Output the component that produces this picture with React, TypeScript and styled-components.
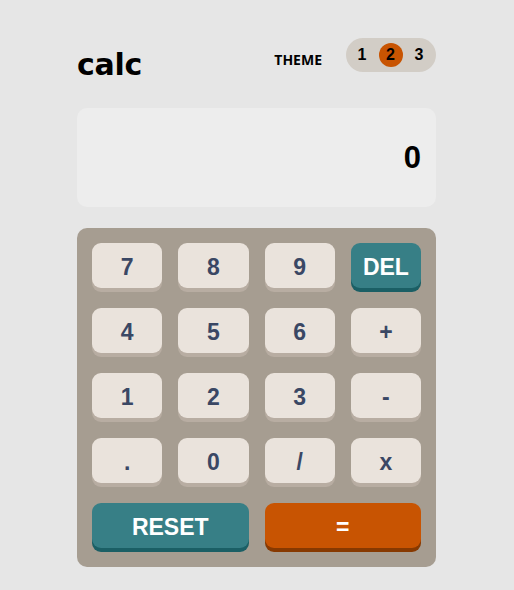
import React, { useState } from "react";
import styled, { createGlobalStyle, css } from "styled-components";

const GlobalStyle = createGlobalStyle`
  body {
    margin: 0;
    background: #e6e6e6;
    font-family: "Liberation Sans", Arial, sans-serif;
  }
`;

const Page = styled.div`
  width: 359px;
  margin: 0 auto;
  padding: 38px 1px 0 0;
`;

const Header = styled.header`
  display: flex;
  align-items: center;
  justify-content: space-between;
  height: 34px;
  margin-bottom: 36px;
`;

const Logo = styled.h1`
  margin: 0;
  font-family: "DejaVu Sans", sans-serif;
  font-size: 30px;
  font-weight: 700;
  letter-spacing: -0.3px;
  color: #000;
  transform: translateY(9px);
`;

const ThemeRow = styled.div`
  display: flex;
  align-items: center;
  gap: 24px;
`;

const ThemeLabel = styled.span`
  font-family: "Open Sans", sans-serif;
  font-size: 14px;
  font-weight: 700;
  color: #000;
  transform: translateY(4px);
`;

const Toggle = styled.div`
  display: flex;
  align-items: center;
  justify-content: space-between;
  width: 90px;
  height: 34px;
  padding: 0 5px 0 4px;
  box-sizing: border-box;
  border-radius: 17px;
  background: #d2cdc6;
`;

const ToggleOption = styled.button<{ $active: boolean }>`
  width: 24px;
  height: 24px;
  padding: 0;
  border: none;
  border-radius: 50%;
  font-family: "Liberation Sans", Arial, sans-serif;
  font-size: 16px;
  font-weight: 700;
  color: #000;
  cursor: pointer;
  background: ${(p) => (p.$active ? "#c85402" : "transparent")};
`;

const Screen = styled.div`
  height: 99px;
  border-radius: 10px;
  background: #ededed;
  display: flex;
  align-items: center;
  justify-content: flex-end;
  padding: 0 15px;
  font-size: 31px;
  font-weight: 700;
  color: #000;
  margin-bottom: 21px;
`;

const Keypad = styled.div`
  display: grid;
  grid-template-columns: repeat(4, 1fr);
  gap: 16px 16px;
  padding: 15px;
  border-radius: 10px;
  background: #a69d91;
`;

type Variant = "plain" | "teal" | "orange";

const palettes = {
  plain: css`
    background: #eae3dc;
    color: #3a4764;
    box-shadow: 0 4px 0 #b8ada2;
  `,
  teal: css`
    background: #377f86;
    color: #fff;
    box-shadow: 0 4px 0 #1b5f65;
  `,
  orange: css`
    background: #c85402;
    color: #fff;
    box-shadow: 0 4px 0 #873901;
  `,
};

const Key = styled.button<{ $variant: Variant; $wide?: boolean }>`
  height: 45px;
  margin-bottom: 4px;
  padding: 3px 0 0;
  border: none;
  border-radius: 9px;
  font-family: "Liberation Sans", Arial, sans-serif;
  font-size: 23px;
  font-weight: 700;
  cursor: pointer;
  ${(p) => palettes[p.$variant]}
  ${(p) => p.$wide && "grid-column: span 2;"}
`;

const keys: { label: string; variant: Variant; wide?: boolean }[] = [
  { label: "7", variant: "plain" },
  { label: "8", variant: "plain" },
  { label: "9", variant: "plain" },
  { label: "DEL", variant: "teal" },
  { label: "4", variant: "plain" },
  { label: "5", variant: "plain" },
  { label: "6", variant: "plain" },
  { label: "+", variant: "plain" },
  { label: "1", variant: "plain" },
  { label: "2", variant: "plain" },
  { label: "3", variant: "plain" },
  { label: "-", variant: "plain" },
  { label: ".", variant: "plain" },
  { label: "0", variant: "plain" },
  { label: "/", variant: "plain" },
  { label: "x", variant: "plain" },
  { label: "RESET", variant: "teal", wide: true },
  { label: "=", variant: "orange", wide: true },
];

export default function App() {
  const [theme, setTheme] = useState(2);

  return (
    <>
      <GlobalStyle />
      <Page>
        <Header>
          <Logo>calc</Logo>
          <ThemeRow>
            <ThemeLabel>THEME</ThemeLabel>
            <Toggle>
              {[1, 2, 3].map((n) => (
                <ToggleOption key={n} $active={theme === n} onClick={() => setTheme(n)}>
                  {n}
                </ToggleOption>
              ))}
            </Toggle>
          </ThemeRow>
        </Header>
        <Screen>0</Screen>
        <Keypad>
          {keys.map((k) => (
            <Key key={k.label} $variant={k.variant} $wide={k.wide}>
              {k.label}
            </Key>
          ))}
        </Keypad>
      </Page>
    </>
  );
}
